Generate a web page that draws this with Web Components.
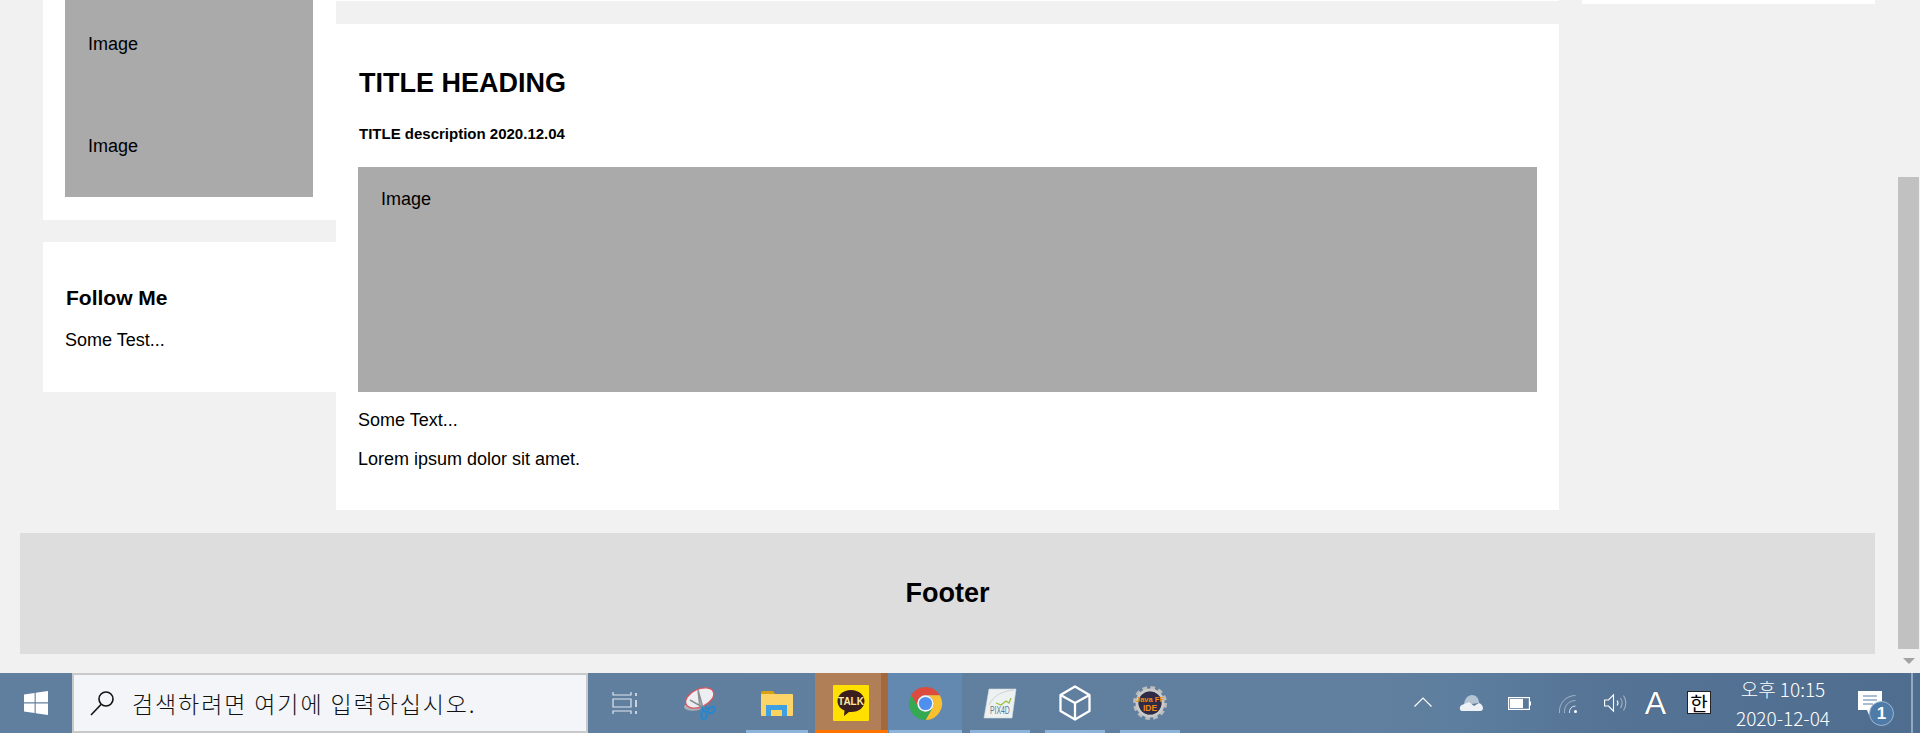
<!DOCTYPE html>
<html>
<head>
<meta charset="utf-8">
<title>Blog</title>
<style>
  html, body { margin: 0; height: 100%; overflow: hidden; background: #f1f1f1; }
  body { font-family: "Liberation Sans", Arial, sans-serif; font-size: 18px; color: #000; }
</style>
</head>
<body>
<desk-top>
  <blog-page>
    <blog-column slot="left" style="--col-width:293px;--col-gap:22px;--pad-right:23px">
      <blog-card style="--card-height:220px">
        <fake-image height="114" top="34"></fake-image>
        <fake-image height="83" top="22"></fake-image>
      </blog-card>
      <blog-card style="--card-height:150px">
        <h3>Follow Me</h3>
        <p>Some Test...</p>
      </blog-card>
    </blog-column>
    <blog-column slot="main" style="--col-width:1223px;--col-gap:23px;--pad-right:22px">
      <blog-card style="--card-height:1px"></blog-card>
      <blog-card style="--card-height:486px">
        <h2>TITLE HEADING</h2>
        <h5>TITLE description 2020.12.04</h5>
        <fake-image height="225" top="22"></fake-image>
        <p>Some Text...</p>
        <p>Lorem ipsum dolor sit amet.</p>
      </blog-card>
    </blog-column>
    <blog-column slot="right" style="--col-width:293px;--col-gap:23px">
      <blog-card style="--card-height:4px"></blog-card>
    </blog-column>
    <blog-footer slot="footer">Footer</blog-footer>
  </blog-page>
  <task-bar></task-bar>
</desk-top>

<script>
class DeskTop extends HTMLElement {
  constructor() {
    super();
    this.attachShadow({ mode: "open" });
    this.shadowRoot.innerHTML = `
      <style>
        :host { display: flex; flex-direction: column; width: 1920px; height: 733px; overflow: hidden; }
      </style>
      <slot></slot>
    `;
  }
}
customElements.define("desk-top", DeskTop);

class BlogPage extends HTMLElement {
  constructor() {
    super();
    this.attachShadow({ mode: "open" });
    this.shadowRoot.innerHTML = `
      <style>
        :host { display: flex; height: 673px; background: #f1f1f1; }
        .content { flex: 1; min-width: 0; padding-left: 20px; }
        .row { display: flex; height: 533px; padding-left: 23px; }
        .gap { width: 23px; }
        .bar { width: 23px; box-sizing: border-box; padding: 177px 2px 0 2px; display: flex; flex-direction: column; align-items: center; }
        .thumb { width: 21px; height: 472px; background: #c1c1c1; flex: none; }
        .arrow { margin-top: 9px; width: 0; height: 0; border-left: 6px solid transparent; border-right: 6px solid transparent; border-top: 6px solid #a3a3a3; }
      </style>
      <div class="content">
        <div class="row">
          <slot name="left"></slot>
          <slot name="main"></slot>
          <div class="gap"></div>
          <slot name="right"></slot>
        </div>
        <slot name="footer"></slot>
      </div>
      <div class="bar"><div class="thumb"></div><div class="arrow"></div></div>
    `;
  }
}
customElements.define("blog-page", BlogPage);

class BlogColumn extends HTMLElement {
  constructor() {
    super();
    this.attachShadow({ mode: "open" });
    this.shadowRoot.innerHTML = `
      <style>
        :host { display: flex; flex-direction: column; gap: var(--col-gap); width: var(--col-width); flex: none; }
      </style>
      <slot></slot>
    `;
  }
}
customElements.define("blog-column", BlogColumn);

class BlogCard extends HTMLElement {
  constructor() {
    super();
    this.attachShadow({ mode: "open" });
    this.shadowRoot.innerHTML = `
      <style>
        :host { display: block; box-sizing: border-box; height: var(--card-height); background: #fff; overflow: hidden; }
        .inner { padding: 0 var(--pad-right, 22px) 0 22px; }
        ::slotted(h2) { margin: 0; padding: 43px 1px 0; font-size: 27px; line-height: 32px; font-weight: bold; }
        ::slotted(h3) { margin: 0 0 20px; padding: 44px 1px 0; font-size: 21px; line-height: 24px; font-weight: bold; }
        ::slotted(h5) { margin: 0; padding: 26px 1px 25px; font-size: 15px; line-height: 17px; font-weight: bold; }
        ::slotted(p) { margin: 18px 0; font-size: 18px; line-height: 21px; }
      </style>
      <div class="inner"><slot></slot></div>
    `;
  }
}
customElements.define("blog-card", BlogCard);

class FakeImage extends HTMLElement {
  constructor() {
    super();
    this.attachShadow({ mode: "open" });
  }
  connectedCallback() {
    const height = this.getAttribute("height");
    const top = this.getAttribute("top");
    this.shadowRoot.innerHTML = `
      <style>
        :host { display: block; height: ${height}px; background: #aaa; box-sizing: border-box; padding: ${top}px 23px 0; font-size: 18px; line-height: 21px; overflow: hidden; }
      </style>
      Image
    `;
  }
}
customElements.define("fake-image", FakeImage);

class BlogFooter extends HTMLElement {
  constructor() {
    super();
    this.attachShadow({ mode: "open" });
    this.shadowRoot.innerHTML = `
      <style>
        :host { display: flex; align-items: center; justify-content: center; height: 121px; width: 1855px; background: #ddd; font-size: 27px; font-weight: bold; }
      </style>
      <slot></slot>
    `;
  }
}
customElements.define("blog-footer", BlogFooter);

class TaskBar extends HTMLElement {
  constructor() {
    super();
    this.attachShadow({ mode: "open" });
    this.shadowRoot.innerHTML = `
      <style>
        :host { display: flex; height: 60px; width: 1920px; background: linear-gradient(90deg, #607f9f 0%, #617f9e 72%, #5d7e9f 76%, #557394 84%, #4f6d8e 100%); color: #fff; overflow: hidden; font-family: "Noto Sans CJK KR", "Liberation Sans", sans-serif; }
        svg { display: block; overflow: visible; }
        .start { width: 72px; display: flex; align-items: center; justify-content: center; }
        .search { width: 516px; box-sizing: border-box; border: 2px solid #c9c9c9; background: #f3f5f8; color: #111; display: flex; align-items: center; padding-left: 16px; gap: 18px; font-size: 23px; font-weight: 300; letter-spacing: 1.9px; white-space: nowrap; }
        .apps { display: flex; width: 824px; flex: none; }
        .app { position: relative; display: flex; align-items: center; justify-content: center; box-sizing: border-box; }
        .app.on::after { content: ""; position: absolute; left: 8px; right: 7px; bottom: 0; height: 3px; background: #8fb4da; }
        .kakao { background: #b07e57; width: 73px; }
        .kakao::before { content: ""; position: absolute; right: 0; top: 0; bottom: 0; width: 7px; background: #a3683b; }
        .kakao::after { content: ""; position: absolute; left: 0; right: 0; bottom: 0; height: 3px; background: #ff7300; }
        .chrome { background: #6389b0; }
        .chrome.on::after { left: 1px; right: 0; }
        .tray { display: flex; align-items: center; flex: 1; position: relative; }
        .ico { display: flex; align-items: center; justify-content: center; flex: none; }
        .clock { width: 120px; margin-left: 12px; flex: none; text-align: center; font-size: 19px; font-weight: 300; line-height: 29px; }
        .han { width: 24px; height: 23px; box-sizing: border-box; background: #fff; color: #000; border: 1px solid #222; font-size: 19px; line-height: 21px; text-align: center; }
        .letter { font-family: "Liberation Sans", sans-serif; font-size: 32px; line-height: 32px; text-shadow: 0 0 1px #1c2b3a; }
        .badge { position: absolute; left: 457px; top: 28px; width: 25px; height: 25px; box-sizing: border-box; border: 1px solid #9db8d2; border-radius: 50%; background: #4f7ba9; color: #fff; font: bold 17px/23px "Liberation Sans", sans-serif; text-align: center; }
        .desk { position: absolute; right: 7px; top: 0; bottom: 0; width: 2px; background: #93a9c0; }
      </style>
      <div class="start">
        <svg width="24" height="24" viewBox="0 0 24 24" fill="#fff"><path d="M0 3.4 10.6 1.9V11.300H0ZM11.700 1.700 24 0V11.300H11.700ZM0 12.400H10.600V21.900L0 20.500ZM11.700 12.400H24V24L11.700 22.200Z"/></svg>
      </div>
      <div class="search">
        <svg width="24" height="24" viewBox="0 0 24 24" fill="none" stroke="#111" stroke-width="1.600" style="flex:none"><circle cx="16" cy="8" r="7"/><path d="M11 13.500 1 24"/></svg>
        <span>검색하려면 여기에 입력하십시오.</span>
      </div>
      <div class="apps">
        <div class="app" style="width:72px;padding-left:0">
          <svg width="25" height="22" viewBox="0 0 25 22" fill="none" stroke="#dfe6ee" stroke-width="1.200"><path d="M1 0V3H19V0M1 7H19V15H1ZM1 22V19H19V22"/><path d="M24 1V4M24 8V15M24 19V22" stroke-width="1.600"/></svg>
        </div>
        <div class="app" style="width:78px;padding-left:2px">
          <svg width="32" height="33" viewBox="0 0 32 33"><ellipse cx="9" cy="20" rx="9" ry="3.800" fill="#aab0b8"/><ellipse cx="15.700" cy="11" rx="15" ry="8.800" transform="rotate(-25 15.700 11)" fill="#eceef1" stroke="#d9545e" stroke-width="1.300"/><path d="M14 3 19 21 16 21ZM6 13 20 21" stroke="#8c8f94" stroke-width="1.500" fill="#b9bcc0"/><path d="M18 20 20 24M21 20 24 22" stroke="#2488d0" stroke-width="2.200"/><ellipse cx="20" cy="28" rx="2.800" ry="4" fill="none" stroke="#2488d0" stroke-width="2.200"/><ellipse cx="27.500" cy="23" rx="2.600" ry="3.800" transform="rotate(50 27.500 23)" fill="none" stroke="#2488d0" stroke-width="2.200"/></svg>
        </div>
        <div class="app on" style="width:77px">
          <svg width="32" height="25" viewBox="0 0 32 25"><path d="M0 2Q0 0 2 0H12L15 4H0Z" fill="#d9a215"/><rect y="3" width="32" height="22" rx="1" fill="#fdd467"/><path d="M5 25V14H26V25Z" fill="#3f9fe0"/><rect x="10" y="19" width="11" height="6" fill="#fbd35d"/></svg>
        </div>
        <div class="app kakao">
          <svg width="36" height="36" viewBox="0 0 36 36" style="margin-right:1px"><rect width="36" height="36" rx="1" fill="#ffe000"/><path d="M18 5C10 5 4.500 10 4.500 16 4.500 20.500 7.500 24 11.500 25.500L11 31 16 27H18C26 27 31.500 22.500 31.500 16 31.500 10 26 5 18 5Z" fill="#3b1e1e"/><text x="18" y="20" text-anchor="middle" font-family="Liberation Sans, sans-serif" font-size="10" font-weight="bold" fill="#ffe9a0">TALK</text></svg>
        </div>
        <div class="app on chrome" style="width:74px">
          <svg width="33" height="33" viewBox="0 0 33 33"><path d="M16.500 0A16.500 16.500 0 0 1 30.800 8.250H16.500A8.250 8.250 0 0 0 9.350 20.600L2.200 8.250A16.500 16.500 0 0 1 16.500 0Z" fill="#dc4b3e"/><path d="M30.800 8.250A16.500 16.500 0 0 1 16.500 33L23.650 20.600A8.250 8.250 0 0 0 16.500 8.250Z" fill="#fbc02d"/><path d="M2.200 8.250A16.500 16.500 0 0 0 16.500 33L23.650 20.600A8.250 8.250 0 0 1 9.350 20.600Z" fill="#34a853"/><circle cx="16.500" cy="16.500" r="8.250" fill="#f4f4f4"/><circle cx="16.500" cy="16.500" r="6.600" fill="#4f8ff0"/></svg>
        </div>
        <div class="app on" style="width:75px">
          <svg width="32" height="29" viewBox="0 0 32 29"><path d="M5 0H32L28 29H0Z" fill="#edf1f2" stroke="#d5dadc" stroke-width=".6"/><path d="M5 16C9 7 18 2 30 1" fill="none" stroke="#cdd3d6"/><path d="M12 14 17 16 22 12 25 14 27 9" fill="none" stroke="#9ac13b" stroke-width="1.300"/><text transform="translate(6 25) scale(.68 1)" font-family="Liberation Sans, sans-serif" font-size="10" fill="#557b93">PIX4D</text></svg>
        </div>
        <div class="app on" style="width:75px">
          <svg width="32" height="36" viewBox="0 0 32 36" fill="none" stroke="#fff" stroke-width="2.300" stroke-linejoin="round"><path d="M16 1.500 30.500 10V26L16 34.500 1.500 26V10ZM1.500 10 16 18 30.500 10M16 18V34.500"/></svg>
        </div>
        <div class="app on" style="width:75px">
          <svg width="34" height="34" viewBox="0 0 34 34"><circle cx="17" cy="17" r="15" fill="none" stroke="#bcbcbc" stroke-width="4" stroke-dasharray="4.500 3.350"/><circle cx="17" cy="17" r="13" fill="none" stroke="#c9c9c9" stroke-width="3"/><circle cx="17" cy="17" r="11.500" fill="#2f2b46"/><text x="17" y="15.500" text-anchor="middle" font-family="Liberation Sans, sans-serif" font-size="7.500" font-weight="bold" fill="#f08a12">Java FF</text><text x="17" y="25" text-anchor="middle" font-family="Liberation Sans, sans-serif" font-size="8.500" font-weight="bold" fill="#f08a12">IDE</text></svg>
        </div>
      </div>
      <div class="tray">
        <div class="ico" style="width:18px;margin-left:2px;margin-top:-2px">
          <svg width="18" height="10" viewBox="0 0 18 10" fill="none" stroke="#fff" stroke-width="1.200"><path d="M.5 9.500 9 1 17.500 9.500"/></svg>
        </div>
        <div class="ico" style="width:24px;margin-left:27px">
          <svg width="24" height="16" viewBox="0 0 24 16"><path d="M5 10C5 4 9 0 13 0 17 0 20 3 20 8Z" fill="#b5c4d3"/><path d="M3 16C0 16 0 10 4 9.500L10 7 15 11 20 8C23 9 24 12 24 13 24 15 23 16 21 16Z" fill="#eef2f6"/></svg>
        </div>
        <div class="ico" style="width:23px;margin-left:25px">
          <svg width="23" height="13" viewBox="0 0 23 13" fill="none"><rect x=".6" y=".6" width="20.800" height="11.800" stroke="#fff" stroke-width="1.200"/><rect x="2" y="2" width="13" height="9" fill="#fff"/><rect x="22" y="4.500" width="1" height="4" fill="#fff"/></svg>
        </div>
        <div class="ico" style="width:19px;margin-left:28px;margin-top:2px">
          <svg width="19" height="18" viewBox="0 0 19 18" fill="none" stroke="#a3b3c5" stroke-width="1"><path d="M.5 18A16 16 0 0 1 16.500 .5M5.500 18A11 11 0 0 1 16.500 5.500"/><path d="M10.500 18A6 6 0 0 1 16.500 11" stroke="#d7dfe8"/><circle cx="16.500" cy="16.500" r="1.500" fill="#fff" stroke="none"/></svg>
        </div>
        <div class="ico" style="width:22px;margin-left:26px">
          <svg width="22" height="18" viewBox="0 0 22 18" fill="none" stroke="#fff" stroke-width="1.100"><path d="M.6 6H4.500L9.500 .8V17.200L4.500 12H.6Z"/><path d="M13 6.500C14.200 8 14.200 10 13 11.500"/><path d="M16.500 4C18.500 7 18.500 11 16.500 14M19.500 1.500C22.300 6 22.300 12 19.500 16.500" stroke="#a3b3c5"/></svg>
        </div>
        <div class="ico letter" style="width:21px;margin-left:19px">A</div>
        <div class="ico" style="width:24px;margin-left:21px;margin-top:-1px"><div class="han">한</div></div>
        <div class="clock"><div>오후 10:15</div><div>2020-12-04</div></div>
        <div class="ico" style="width:24px;margin-left:15px">
          <svg width="24" height="24" viewBox="0 0 24 24"><path d="M0 0H24V19H14L11 24 9 19H0Z" fill="#fff"/><path d="M5 5H19M5 9H19M5 13H15" stroke="#5b7c9f" stroke-width="1.200"/></svg>
        </div>
        <div class="badge">1</div>
        <div class="desk"></div>
      </div>
    `;
  }
}
customElements.define("task-bar", TaskBar);
</script>
</body>
</html>
